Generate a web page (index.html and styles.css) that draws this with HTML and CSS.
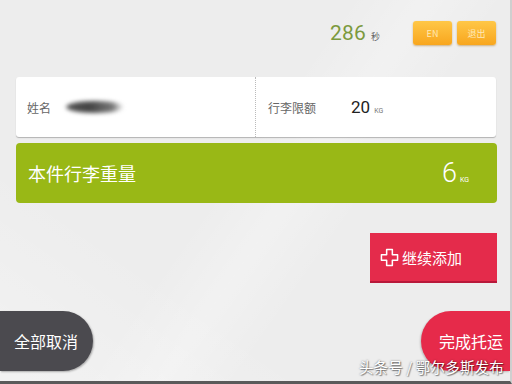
FILE: index.html
```html
<!DOCTYPE html>
<html lang="zh">
<head>
<meta charset="utf-8">
<link rel="stylesheet" href="styles.css">
</head>
<body>
<div class="screen">
  <header class="topbar">
    <div class="timer"><span class="secs">286</span><span class="unit">秒</span></div>
    <button class="btn-orange">EN</button>
    <button class="btn-orange">退出</button>
  </header>

  <section class="info-card">
    <div class="info-cell">
      <span class="label">姓名</span>
      <span class="name-blur"></span>
    </div>
    <div class="info-cell right">
      <span class="label">行李限额</span>
      <span class="limit">20<small>KG</small></span>
    </div>
  </section>

  <section class="weight-bar">
    <span class="weight-label">本件行李重量</span>
    <span class="weight-value">6<small>KG</small></span>
  </section>

  <div class="add-row">
    <button class="btn-add">
      <svg class="plus" viewBox="0 0 20 20" width="19" height="19">
        <path d="M7 1.5h6v5.5h5.5v6H13v5.5H7V13H1.5V7H7z" fill="none" stroke="#fff" stroke-width="1.6" stroke-linejoin="round"/>
      </svg>
      <span>继续添加</span>
    </button>
  </div>

  <footer class="bottom">
    <button class="btn-cancel">全部取消</button>
    <button class="btn-done">完成托运</button>
  </footer>

  <div class="watermark">头条号 / 鄂尔多斯发布</div>
</div>
</body>
</html>
```

FILE: styles.css
```css
* { box-sizing: border-box; }
html, body { margin: 0; padding: 0; }
body {
  width: 512px;
  height: 384px;
  overflow: hidden;
  font-family: "Noto Sans CJK SC", "Roboto", sans-serif;
}
.screen {
  position: relative;
  width: 512px;
  height: 384px;
  display: flex;
  flex-direction: column;
  background:
    linear-gradient(125deg, rgba(255,255,255,0) 45%, rgba(255,255,255,0.25) 55%, rgba(255,255,255,0) 65%),
    linear-gradient(35deg, rgba(255,255,255,0.3) 0%, rgba(255,255,255,0) 30%),
    #ededed;
  border-right: 2px solid #cfcfcf;
  border-bottom: 3px solid #5a5a5a;
}
button {
  border: 0;
  padding: 0;
  font-family: "Noto Sans CJK SC", sans-serif;
  cursor: pointer;
}

/* top bar */
.topbar {
  display: flex;
  align-items: center;
  justify-content: flex-end;
  padding: 21px 14px 0 0;
  height: 45px;
}
.timer {
  display: flex;
  align-items: baseline;
  margin-right: 28px;
}
.secs {
  font-family: "Roboto", sans-serif;
  font-size: 21px;
  color: #7c9a3e;
  letter-spacing: 0.2px;
}
.unit {
  font-size: 9px;
  color: #666;
  margin-left: 5px;
}
.btn-orange {
  width: 39px;
  height: 24px;
  margin-left: 5px;
  border-radius: 3px;
  background: linear-gradient(#ffc747, #f8a61e);
  box-shadow: 0 1px 2px rgba(160,100,0,0.45);
  color: #ffe9b8;
  font-size: 9px;
}

/* info card */
.info-card {
  display: flex;
  margin: 32px 14px 0 16px;
  height: 60px;
  background: #fff;
  border-radius: 3px;
  box-shadow: 0 1px 1px rgba(0,0,0,0.25);
}
.info-cell {
  flex: 1;
  display: flex;
  align-items: center;
  padding-left: 11px;
}
.info-cell.right {
  border-left: 1px dotted #bbb;
  padding-left: 12px;
}
.label {
  font-size: 12px;
  color: #666;
}
.name-blur {
  display: block;
  width: 58px;
  height: 12px;
  margin-left: 15px;
  border-radius: 50%;
  background: linear-gradient(90deg, #555 0%, #444 40%, #777 80%, rgba(150,150,150,0) 100%);
  filter: blur(2px);
}
.limit {
  font-family: "Roboto", sans-serif;
  font-size: 17px;
  color: #222;
  margin-left: 35px;
}
.limit small {
  font-size: 7px;
  color: #777;
  margin-left: 4px;
}

/* weight bar */
.weight-bar {
  display: flex;
  align-items: center;
  justify-content: space-between;
  margin: 6px 13px 0 16px;
  height: 60px;
  padding: 0 28px 0 12px;
  background: #99b816;
  border-radius: 4px;
}
.weight-label {
  font-size: 18px;
  color: #fff;
}
.weight-value {
  font-family: "Roboto", sans-serif;
  font-weight: 300;
  font-size: 27px;
  color: #fff;
}
.weight-value small {
  font-size: 7px;
  font-weight: 400;
  margin-left: 3px;
}

/* add button */
.add-row {
  display: flex;
  justify-content: flex-end;
  padding: 30px 13px 0 0;
}
.btn-add {
  display: flex;
  align-items: center;
  width: 127px;
  height: 50px;
  padding-left: 10px;
  background: #e42b4b;
  border-bottom: 2px solid #b8183a;
  color: #fff;
  font-size: 15px;
}
.btn-add .plus { margin-right: 3px; }

/* footer */
.bottom {
  display: flex;
  justify-content: space-between;
  margin-top: 28px;
}
.btn-cancel {
  width: 93px;
  height: 60px;
  border-radius: 0 30px 30px 0;
  background: #4b4a4f;
  color: #fff;
  font-size: 16px;
  text-align: left;
  padding-left: 14px;
  box-shadow: 1px 1px 2px rgba(0,0,0,0.3);
}
.btn-done {
  width: 89px;
  height: 60px;
  border-radius: 30px 0 0 30px;
  background: #e62a4a;
  color: #fff;
  font-size: 16px;
  text-align: left;
  padding-left: 18px;
  box-shadow: -1px 1px 2px rgba(0,0,0,0.2);
}

.watermark {
  position: absolute;
  right: 6px;
  bottom: 4px;
  font-size: 14.5px;
  color: #fff;
  letter-spacing: 0.2px;
  text-shadow: 0 0 2px rgba(0,0,0,0.55), 1px 1px 1px rgba(0,0,0,0.4);
}
```
